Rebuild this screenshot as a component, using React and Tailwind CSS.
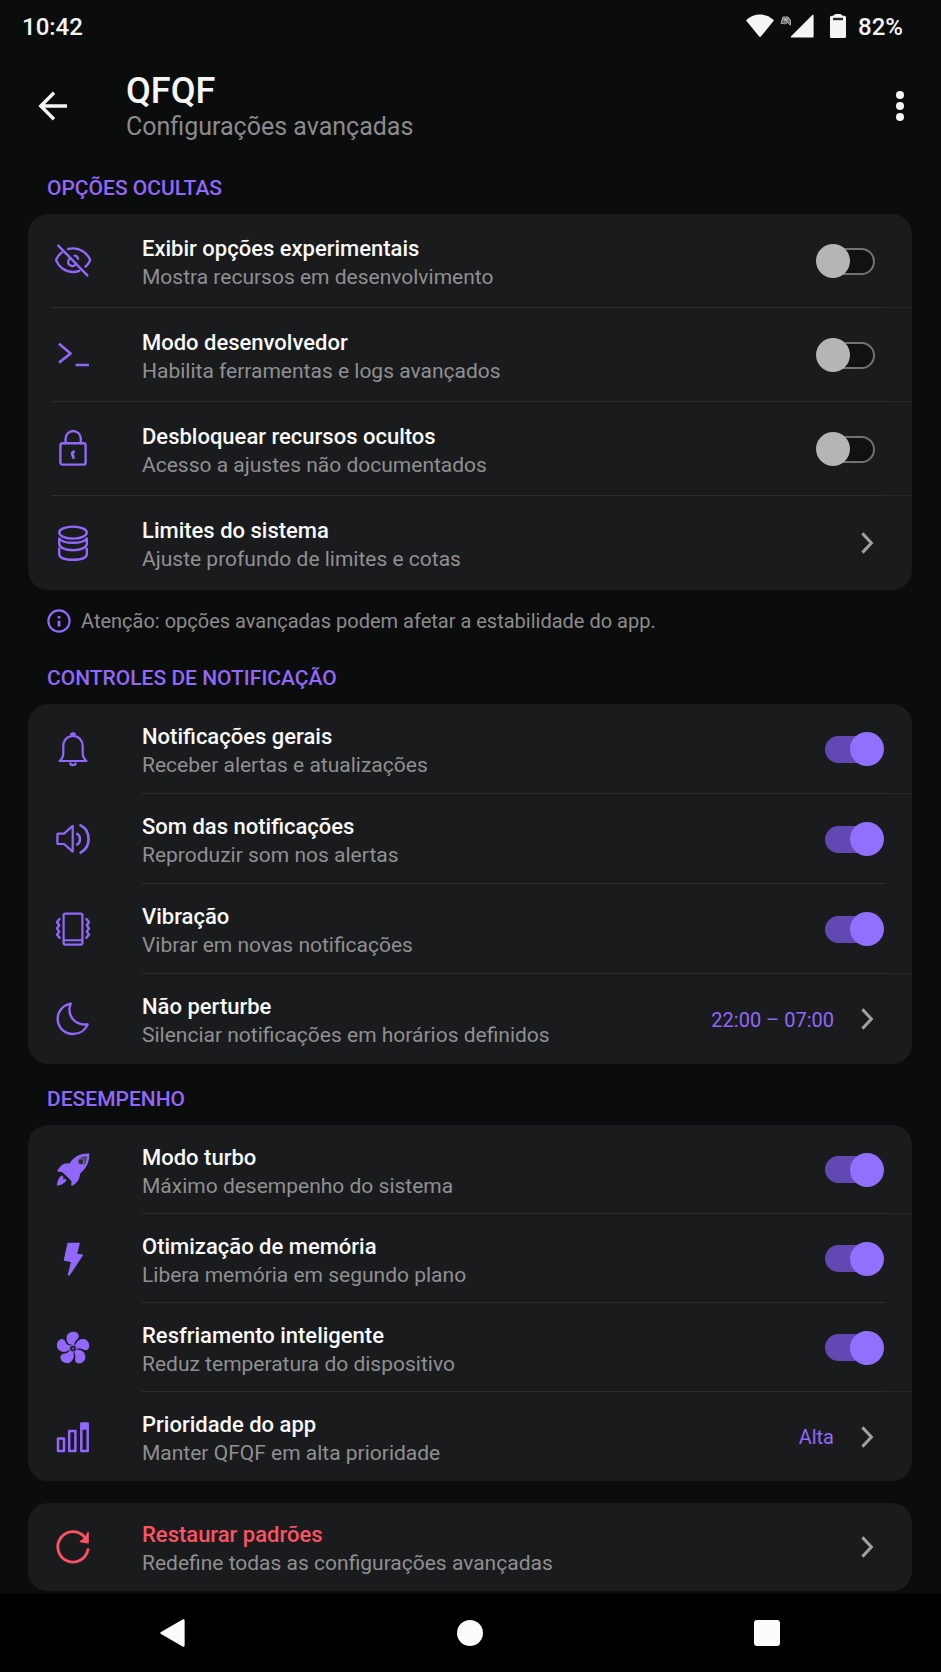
import { useState } from 'react';

const Svg = ({ children, className = 'text-[#9168fb]' }) => (
    <svg viewBox="0 0 42 42" className={`h-[42px] w-[42px] shrink-0 ${className}`} fill="none" stroke="currentColor" strokeWidth="2.4" strokeLinecap="round" strokeLinejoin="round" aria-hidden="true">
        {children}
    </svg>
);

const Icons = {
    EyeOff: () => (
        <Svg>
            <path d="M9.6 12.6C7 14.8 5 17.6 4.4 19.3c-.3.7-.3 1 0 1.6C7 27 13.4 32 21 32c2.3 0 4.4-.4 6.3-1.1" />
            <path d="M16.2 9c1.5-.4 3.1-.6 4.8-.6 7.6 0 14 4.7 16.9 11 .3.6.3 1 0 1.6-1 2.1-2.5 4.1-4.4 5.7" />
            <path d="M18.4 18.2a4.2 4.2 0 1 0 5.8 5.4M22.8 15.6c1.6.3 2.9 1.5 3.2 3.1" />
            <path d="M6.3 5.6l29 29.8" />
        </Svg>
    ),
    Terminal: () => (
        <Svg>
            <path d="M7 9.8l11.6 9.7L7 28.6M23.6 31h13.4" strokeWidth="2.7" strokeLinecap="butt" />
        </Svg>
    ),
    Lock: () => (
        <Svg>
            <rect x="8.4" y="15.2" width="25.2" height="21.4" rx="2.2" />
            <path d="M13.6 15.2v-4.6a7.600 7.600 0 0 1 15.2 0v4.6" />
            <path d="M21.6 23.8a2 2 0 0 0-.8 3.4l.6 2.4" strokeWidth="2.9" />
        </Svg>
    ),
    Database: () => (
        <Svg>
            <ellipse cx="21" cy="10.6" rx="13.8" ry="6" />
            <path d="M7.2 16.4v5.4c0 3.6 5.6 6.4 13.8 6.4s13.8-2.8 13.8-6.4v-5.4c-1.6 2.4-6.6 4.4-13.8 4.4S8.800 18.800 7.200 16.400z" />
            <path d="M7.2 26.8v5.2c0 3.6 5.6 5.8 13.8 5.8s13.8-2.2 13.8-5.8v-5.2" />
        </Svg>
    ),
    Bell: () => (
        <Svg>
            <path d="M7.6 33c2.6-2.4 3.7-4.6 3.7-7.800v-7c0-5.800 3.700-10.200 9.700-10.200s9.700 4.400 9.700 10.200v7c0 3.200 1.100 5.400 3.700 7.800z" strokeWidth="2.2" />
            <path d="M21 4.2a3 3 0 0 1 3 3.2h-6A3 3 0 0 1 21 4.2z" fill="currentColor" stroke="none" />
            <path d="M18.4 35.6c.6 1.8 4.6 1.8 5.2 0" />
        </Svg>
    ),
    Sound: () => (
        <Svg>
            <path d="M6.2 15.6h5.8l8.7-7.700v25.700L12 26H6.200c-.5 0-.8-.3-.8-.8v-8.800c0-.5.3-.8.800-.8z" strokeWidth="2.2" />
            <path d="M25.2 15.8c3.7 2.4 3.7 8.2 0 10.8" />
            <path d="M28.6 7.4c10.6 5.4 10.6 21.8 0 27.2" strokeWidth="2.7" />
        </Svg>
    ),
    Vibrate: () => (
        <Svg>
            <rect x="11.6" y="5.6" width="18.8" height="31" rx="1.6" strokeWidth="2.2" />
            <path d="M11.6 32.2h18.8" strokeWidth="2" />
            <path d="M7.6 11l-2.6 3 2.2 3.2L5 20.4l2.2 3.2L5 26.6l2.6 3.2M34.4 11l2.6 3-2.2 3.2 2.2 3.2-2.2 3.2 2.2 3-2.6 3.2" />
        </Svg>
    ),
    Moon: () => (
        <Svg>
            <path d="M18.8 5.6C10.8 7 5.7 13.3 5.7 20.8c0 8.7 6.7 15.2 15.3 15.2 6.8 0 12.4-3.8 14.6-9.6-10.4 1.2-18.2-5.8-18.2-14.6 0-2.3.5-4.2 1.4-6.2z" />
        </Svg>
    ),
    Rocket: () => (
        <Svg>
            <g fill="currentColor" stroke="none">
                <path d="M37.4 4.6c-8.6-.2-15.2 2.8-20 9.8-4.2-.6-8 .9-10.2 4.6l-1.4 1.8c-.8 1.2-.3 2 .9 2l3.4.1 9.3 9.1-.2 3.4c0 1.4 1 1.8 2 .9 4.2-2.8 6.6-6.4 6.8-11.6 6.2-4.8 9.6-11.7 9.400-20.100z" />
                <path d="M10.2 26.4c-3 1.4-4.6 4.4-5.4 10.2 3-.3 6.8-1.4 9.8-5.2l-1.600-1.800-2.200 1 .9-2.600z" />
            </g>
            <path d="M35 7c-2.600 0-5.200.8-7.200 2.200l4.600 7c1.600-2.400 2.600-5.600 2.600-9.200z" fill="#4a4366" stroke="none" />
            <circle cx="29" cy="12.6" r="3" fill="#2c2937" stroke="#7a6bb0" strokeWidth="1" />
        </Svg>
    ),
    Bolt: () => (
        <Svg>
            <path d="M16 5.4h11.2l-2.6 10.8 6 .8-13.3 20h-1l3.3-13.3-7.2-1.6z" fill="currentColor" strokeWidth="1.2" />
        </Svg>
    ),
    Fan: () => (
        <Svg>
            <g transform="translate(21 21.500)" fill="currentColor" stroke="#191b1d" strokeWidth="1">
                {[0, 72, 144, 216, 288].map((deg) => (
                    <path key={deg} transform={`rotate(${deg})`} d="M-2.800-2.600C-6.800-5.400-8-10-6-13.800c2-3.600 7.600-4.600 10.600-2 2.800 2.600 1.600 5.600-.6 7.200-2 1.600-2 3.600-1.200 6L0 0z" />
                ))}
            </g>
            <circle cx="21" cy="21.5" r="3.6" fill="#231e36" stroke="#9168fb" strokeWidth="1" />
            <circle cx="21" cy="21.5" r="1.2" fill="#5d5575" stroke="none" />
        </Svg>
    ),
    Bars: () => (
        <Svg>
            <g strokeWidth="2.5">
                <rect x="6" y="22.6" width="6" height="12.4" />
                <rect x="17.2" y="15" width="6.2" height="20" />
                <rect x="29.3" y="7.6" width="6.4" height="27.4" />
            </g>
            <path d="M29.3 7.6h6.4v6.2h-6.4z" fill="currentColor" stroke="none" />
        </Svg>
    ),
    Reset: () => (
        <Svg className="text-[#fb5363]">
            <path d="M36 23.6a15.200 15.200 0 1 1-5.200-14.400l2.600 2.800" strokeWidth="2.9" />
            <path d="M36.2 6.4v10.4l-8-1.2 4.8-3.4z" fill="currentColor" strokeWidth="1.2" />
        </Svg>
    ),
    Chevron: () => (
        <svg viewBox="0 0 34 24" className="h-6 w-[34px] shrink-0 text-[#a0a0a1]" fill="none" stroke="currentColor" strokeWidth="3" aria-hidden="true">
            <path d="M12.4 2.4l9 9.600-9 9.600" />
        </svg>
    ),
    Info: () => (
        <svg viewBox="0 0 24 24" className="h-6 w-6 shrink-0 text-[#9168fb]" fill="none" stroke="currentColor" strokeWidth="2.2" aria-hidden="true">
            <circle cx="12" cy="12" r="10.6" />
            <path d="M12 11.8v5.8M12 7v2.4" strokeWidth="2.8" />
        </svg>
    )
};

const groups = [
    {
        title: 'OPÇÕES OCULTAS',
        rowClass: 'min-h-[94px]',
        lineClass: 'ml-6',
        note: 'Atenção: opções avançadas podem afetar a estabilidade do app.',
        items: [
            { id: 'experimental', icon: Icons.EyeOff, title: 'Exibir opções experimentais', desc: 'Mostra recursos em desenvolvimento', toggle: true },
            { id: 'dev', icon: Icons.Terminal, title: 'Modo desenvolvedor', desc: 'Habilita ferramentas e logs avançados', toggle: true },
            { id: 'unlock', icon: Icons.Lock, title: 'Desbloquear recursos ocultos', desc: 'Acesso a ajustes não documentados', toggle: true },
            { id: 'limits', icon: Icons.Database, title: 'Limites do sistema', desc: 'Ajuste profundo de limites e cotas' }
        ]
    },
    {
        title: 'CONTROLES DE NOTIFICAÇÃO',
        rowClass: 'min-h-[90px]',
        lineClass: 'ml-[114px]',
        items: [
            { id: 'general', icon: Icons.Bell, title: 'Notificações gerais', desc: 'Receber alertas e atualizações', toggle: true },
            { id: 'sound', icon: Icons.Sound, title: 'Som das notificações', desc: 'Reproduzir som nos alertas', toggle: true, shortLine: true },
            { id: 'vibrate', icon: Icons.Vibrate, title: 'Vibração', desc: 'Vibrar em novas notificações', toggle: true },
            { id: 'dnd', icon: Icons.Moon, title: 'Não perturbe', desc: 'Silenciar notificações em horários definidos', value: '22:00 – 07:00' }
        ]
    },
    {
        title: 'DESEMPENHO',
        rowClass: 'min-h-[89px]',
        lineClass: 'ml-[114px]',
        items: [
            { id: 'turbo', icon: Icons.Rocket, title: 'Modo turbo', desc: 'Máximo desempenho do sistema', toggle: true },
            { id: 'memory', icon: Icons.Bolt, title: 'Otimização de memória', desc: 'Libera memória em segundo plano', toggle: true, shortLine: true },
            { id: 'cooling', icon: Icons.Fan, title: 'Resfriamento inteligente', desc: 'Reduz temperatura do dispositivo', toggle: true },
            { id: 'priority', icon: Icons.Bars, title: 'Prioridade do app', desc: 'Manter QFQF em alta prioridade', value: 'Alta' }
        ]
    }
];

const Switch = ({ id, checked, onChange }) => (
    <span className="relative flex h-[34px] w-[68px] shrink-0 items-center justify-center">
        <input
            id={id} type="checkbox" role="switch" checked={checked} onChange={onChange}
            className="peer h-[27px] w-[50px] cursor-pointer appearance-none rounded-full border-2 border-[#717272] bg-[#101112] checked:border-[#6148b2] checked:bg-[#6148b2]"
        />
        <span className="pointer-events-none absolute top-0 left-0 h-[34px] w-[34px] rounded-full bg-[#b5b5b5] transition-transform peer-checked:translate-x-[34px] peer-checked:bg-[#9270ff]"></span>
    </span>
);

const RowText = ({ title, desc, danger }) => (
    <span className="block min-w-0 flex-1 pt-1 text-left">
        <span className={`block text-[22px] leading-[29px] font-medium ${danger ? 'text-[#fb5363]' : 'text-[#f8f8f8]'}`}>{title}</span>
        <span className="block text-[21px] leading-[29px] text-[#8f9091]">{desc}</span>
    </span>
);

const Row = ({ item, rowClass, checked, onToggle }) => {
    const Icon = item.icon;
    const base = `flex w-full cursor-pointer items-center pr-7 pl-6 ${rowClass}`;

    if (item.toggle) {
        return (
            <label htmlFor={item.id} className={base}>
                <Icon />
                <span className="w-12 shrink-0"></span>
                <RowText title={item.title} desc={item.desc} />
                <Switch id={item.id} checked={checked} onChange={() => onToggle(item.id)} />
            </label>
        );
    }
    return (
        <button type="button" className={base}>
            <Icon />
            <span className="w-12 shrink-0"></span>
            <RowText title={item.title} desc={item.desc} danger={item.danger} />
            {item.value && <span className="mr-4 pt-[2px] text-[20px] leading-[29px] text-[#9168fb]">{item.value}</span>}
            <Icons.Chevron />
        </button>
    );
};

const StatusBar = () => (
    <div className="flex h-[52px] items-center justify-between pr-[38px] pl-[22px] text-[24px] leading-none font-medium text-[#f5f5f5]">
        <span className="pt-[2px]">10:42</span>
        <div className="flex items-center">
            <svg viewBox="0 0 28 24" className="h-6 w-7" fill="currentColor" aria-hidden="true">
                <path d="M.6 5.800C8.200-1.200 19.800-1.200 27.400 5.800c.4.400.4.800.1 1.200L14.800 22.600c-.5.500-1.100.5-1.600 0L.5 7c-.3-.4-.3-.8.1-1.200z" />
            </svg>
            <svg viewBox="0 0 34 24" className="ml-[6px] h-6 w-[34px]" fill="currentColor" aria-hidden="true">
                <path d="M33.6 1.6v21.200c0 .5-.3.800-.8.800H11.600c-.8 0-1.100-.8-.5-1.400L32.300 1c.6-.6 1.300-.2 1.300.6z" />
                <path d="M1 8.8L2.6 3h5.8l2.2 3v5.400L8 8.600l-1.600 1.600L4 8.400z" fill="#6a6a6a" />
                <path d="M1 9.4l2-6.400h5l2.400 3.200v5l-3-3-2 1.600zM3.400 5.600h5M4.600 3.800l3.400 4.800M3.600 8l4-3.600" fill="none" stroke="#bdbdbd" strokeWidth="0.9" />
            </svg>
            <svg viewBox="0 0 16 24" className="ml-4 h-6 w-4" fill="currentColor" aria-hidden="true">
                <path d="M5.4 0h5.200l2.200 1.800h1.400c1 0 1.800.8 1.800 1.800v18.800c0 .9-.7 1.600-1.600 1.600H1.600C.7 24 0 23.300 0 22.400V3.600c0-1 .8-1.800 1.800-1.800h1.400z" />
                <path d="M3 3.8h10v2.400H3z" fill="#2a2a2a" />
            </svg>
            <span className="ml-3 pt-[2px]">82%</span>
        </div>
    </div>
);

const Header = () => (
    <header className="flex h-[101px] items-center pt-[6px] pr-7 pl-8">
        <button type="button" aria-label="Voltar" className="flex h-11 w-[42px] shrink-0 items-center justify-center text-[#f5f5f5]">
            <svg viewBox="0 0 30 30" className="h-[30px] w-[30px]" fill="none" stroke="currentColor" strokeWidth="3.4" aria-hidden="true">
                <path d="M29 15H3M16 1.8L2.800 15 16 28.200" />
            </svg>
        </button>
        <div className="ml-[52px] flex-1 pt-[2px]">
            <h1 className="text-[36px] leading-[40px] font-medium text-[#f5f5f5]">QFQF</h1>
            <p className="text-[25px] leading-[32px] text-[#8b8b8c]">Configurações avançadas</p>
        </div>
        <button type="button" aria-label="Mais opções" className="flex h-11 w-[26px] flex-col items-center justify-center gap-[3px]">
            <span className="h-2 w-2 rounded-full bg-[#f5f5f5]"></span>
            <span className="h-2 w-2 rounded-full bg-[#f5f5f5]"></span>
            <span className="h-2 w-2 rounded-full bg-[#f5f5f5]"></span>
        </button>
    </header>
);

const NavBar = () => (
    <nav className="mt-auto grid h-[78px] grid-cols-3 items-center bg-black pr-[26px] pl-6 text-[#fcfcfc]">
        <button type="button" aria-label="Voltar" className="flex justify-center">
            <svg viewBox="0 0 26 28" className="h-7 w-[26px]" fill="currentColor" aria-hidden="true">
                <path d="M1 13L22.600.6c1.200-.6 2 0 2 1v24.800c0 1-.8 1.600-2 1L1 15c-1-.6-1-1.400 0-2z" />
            </svg>
        </button>
        <button type="button" aria-label="Início" className="flex justify-center">
            <span className="h-[26px] w-[26px] rounded-full bg-[#fcfcfc]"></span>
        </button>
        <button type="button" aria-label="Recentes" className="flex justify-center">
            <span className="h-[26px] w-[26px] rounded-[3px] bg-[#fcfcfc]"></span>
        </button>
    </nav>
);

export default function App() {
    const [enabled, setEnabled] = useState({ general: true, sound: true, vibrate: true, turbo: true, memory: true, cooling: true });
    const toggle = (id) => setEnabled((prev) => ({ ...prev, [id]: !prev[id] }));

    const restore = { id: 'restore', icon: Icons.Reset, title: 'Restaurar padrões', desc: 'Redefine todas as configurações avançadas', danger: true };

    return (
        <div className="flex min-h-screen flex-col bg-[#0b0c0c] font-[Roboto,'Liberation_Sans',sans-serif]">
            <StatusBar />
            <Header />
            <main className="pr-[29px] pb-[3px] pl-7">
                {groups.map((group) => (
                    <section key={group.title}>
                        <h2 className="px-[19px] pt-[21px] pb-3 text-[21px] leading-[28px] font-medium text-[#9168fb]">{group.title}</h2>
                        <div className="rounded-[20px] bg-[#191b1d]">
                            {group.items.map((item, i) => (
                                <div key={item.id}>
                                    <Row item={item} rowClass={group.rowClass} checked={!!enabled[item.id]} onToggle={toggle} />
                                    {i < group.items.length - 1 && (
                                        <div className={`-mt-px flex h-px ${group.lineClass}`}>
                                            <div className="flex-1 bg-[#2c2e2f]"></div>
                                            <div className={`w-[26px] ${item.shortLine ? '' : 'bg-[#242627]'}`}></div>
                                        </div>
                                    )}
                                </div>
                            ))}
                        </div>
                        {group.note && (
                            <p className="flex items-center gap-[10px] px-[19px] pt-[17px] pb-2 text-[20px] leading-[28px] text-[#8b8b8c]">
                                <Icons.Info />
                                {group.note}
                            </p>
                        )}
                    </section>
                ))}
                <div className="mt-[22px] rounded-[20px] bg-[#191b1d]">
                    <Row item={restore} rowClass="min-h-[88px]" />
                </div>
            </main>
            <NavBar />
        </div>
    );
}
